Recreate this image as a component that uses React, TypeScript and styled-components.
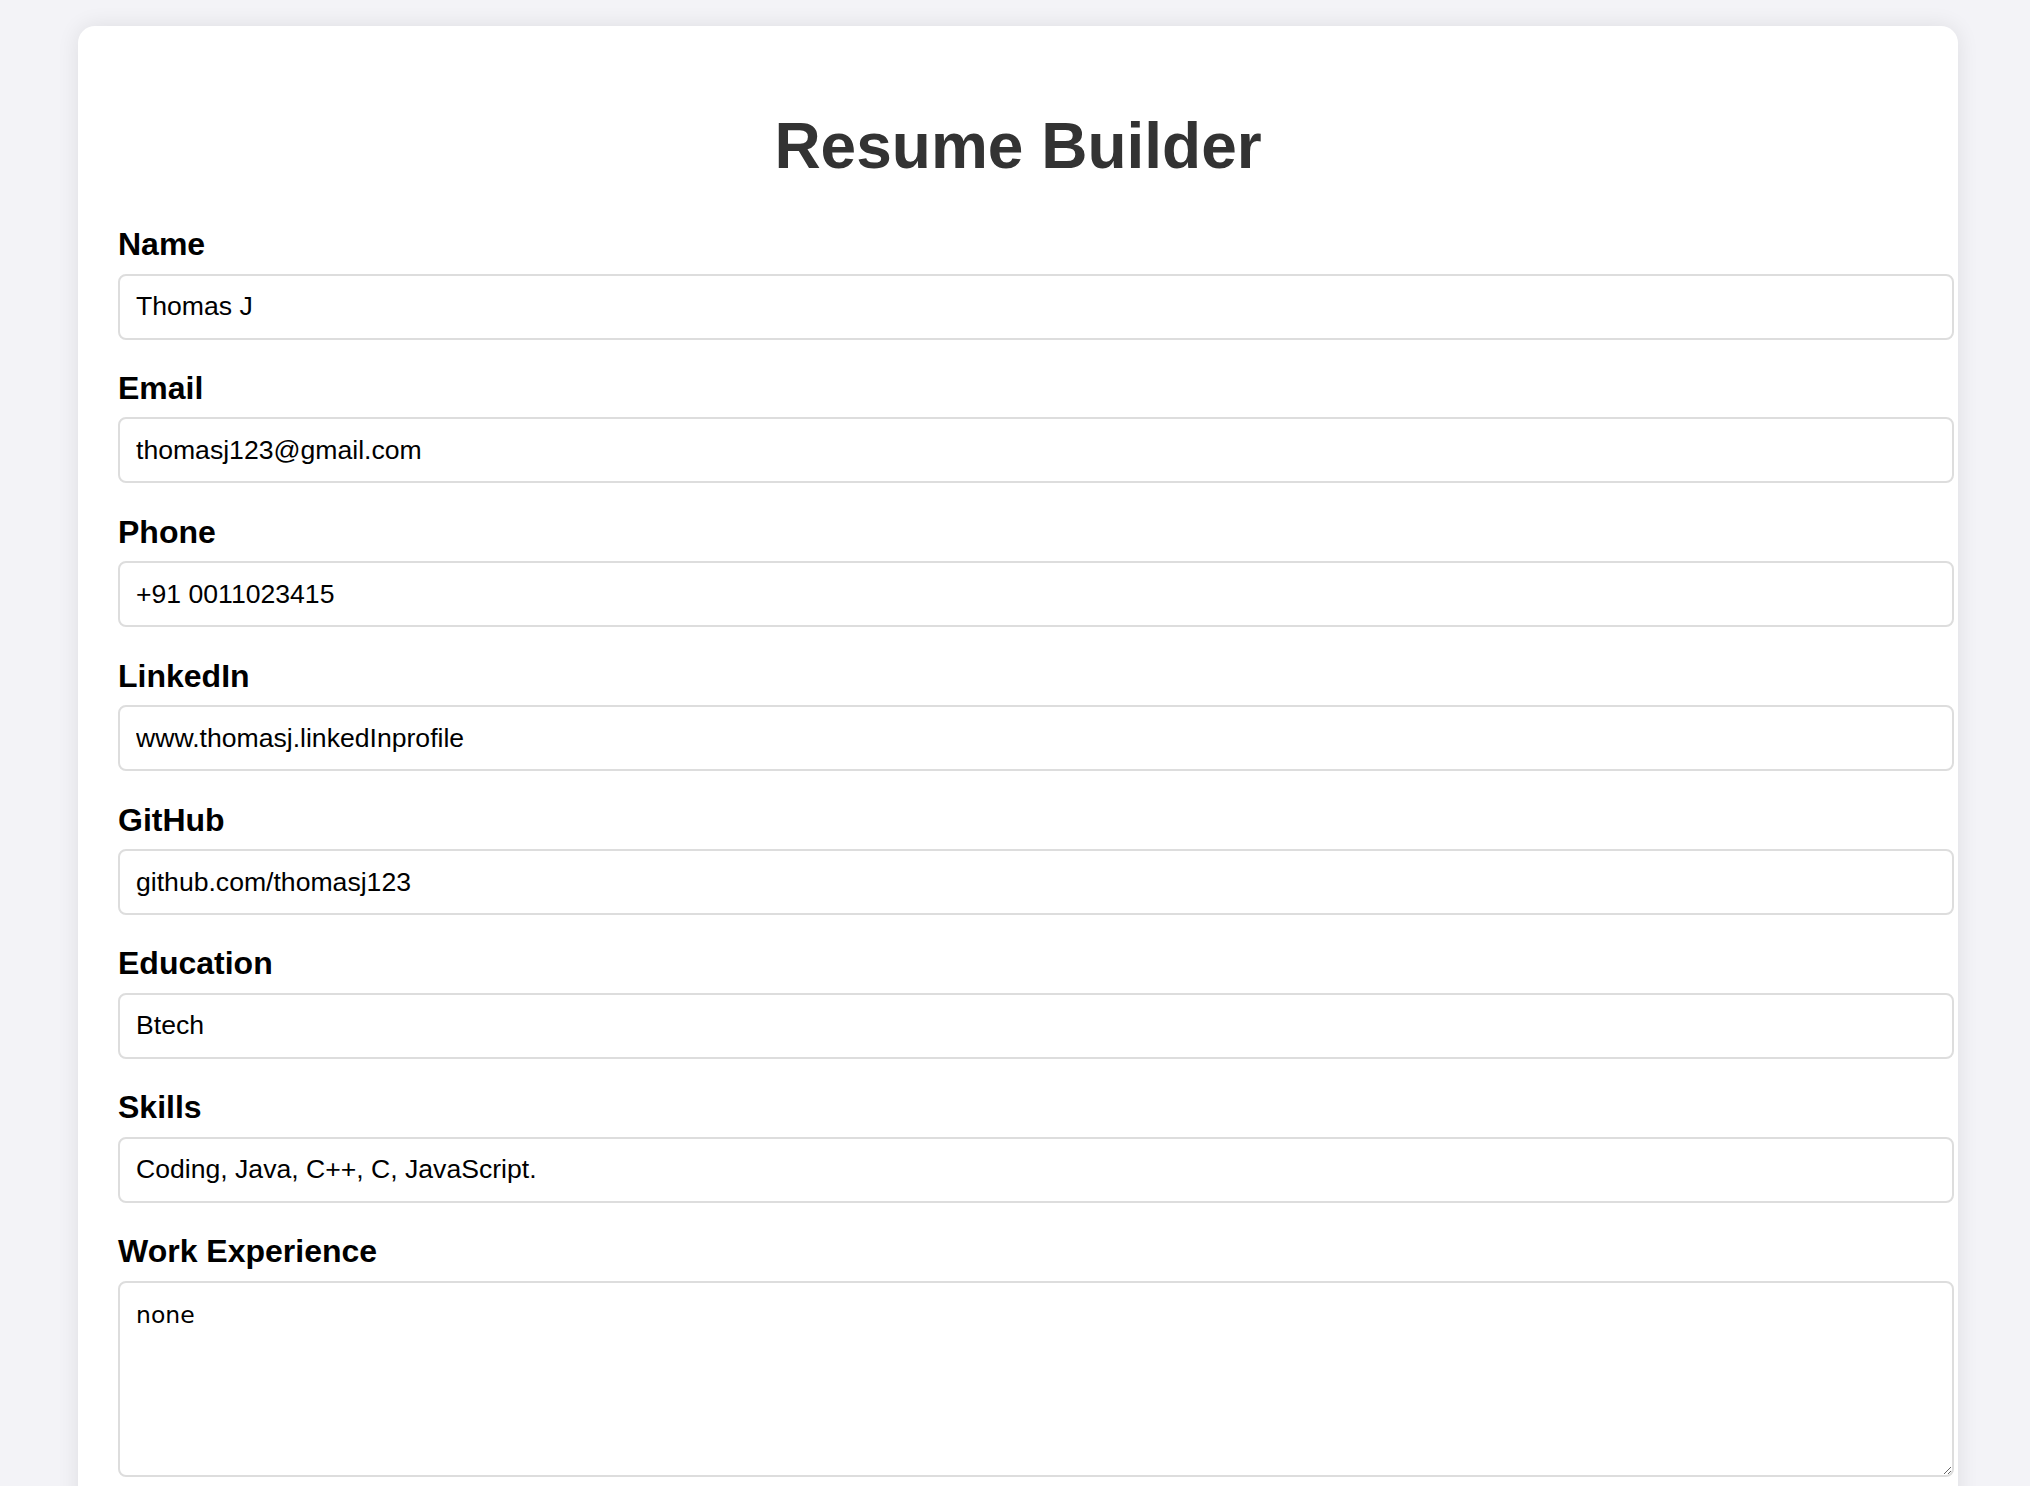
import styled, { createGlobalStyle } from 'styled-components'

const GlobalStyle = createGlobalStyle`
    html, body {
        margin: 0;
        padding: 0;
        background: #f3f3f7;
    }

    body {
        font-family: "Liberation Sans", Arial, sans-serif;
    }
`

const Page = styled.main`
    min-height: 100vh;
    padding: 26px 72px 0 78px;
    box-sizing: border-box;
`

const Card = styled.section`
    width: 1800px;
    padding: 40px 40px 60px;
    background: #fff;
    border-radius: 17px;
    box-shadow: 0 0 22px rgba(0, 0, 0, 0.09);
`

const Title = styled.h1`
    margin: 43px 0;
    font-size: 64px;
    font-weight: 700;
    color: #333;
    text-align: center;
`

const Field = styled.div`
    margin-bottom: 30.4px;
`

const Label = styled.label`
    display: block;
    margin-bottom: 10.5px;
    font-size: 32px;
    font-weight: 700;
    color: #000;
`

const Input = styled.input`
    display: block;
    width: 100%;
    padding: 15.5px 16px;
    border: 2px solid #ddd;
    border-radius: 8px;
    font-family: "Liberation Sans", Arial, sans-serif;
    font-size: 26.6px;
    color: #000;
    background: #fff;
    outline: none;
`

const TextArea = styled.textarea`
    display: block;
    width: 100%;
    height: 158px;
    padding: 18px 16px 16px;
    border: 2px solid #ddd;
    border-radius: 8px;
    font-family: "DejaVu Sans", sans-serif;
    font-size: 23.5px;
    color: #000;
    background: #fff;
    outline: none;
`

const fields = [
    { id: 'name', label: 'Name', value: 'Thomas J' },
    { id: 'email', label: 'Email', value: 'thomasj123@gmail.com' },
    { id: 'phone', label: 'Phone', value: '+91 0011023415' },
    { id: 'linkedin', label: 'LinkedIn', value: 'www.thomasj.linkedInprofile' },
    { id: 'github', label: 'GitHub', value: 'github.com/thomasj123' },
    { id: 'education', label: 'Education', value: 'Btech' },
    { id: 'skills', label: 'Skills', value: 'Coding, Java, C++, C, JavaScript.' },
]

export default function App() {
  return (
    <>
        <GlobalStyle />
        <Page>
            <Card>
                <Title>Resume Builder</Title>
                {fields.map((f) => (
                    <Field key={f.id}>
                        <Label htmlFor={f.id}>{f.label}</Label>
                        <Input id={f.id} type="text" defaultValue={f.value} />
                    </Field>
                ))}
                <Field>
                    <Label htmlFor="experience">Work Experience</Label>
                    <TextArea id="experience" defaultValue="none" />
                </Field>
            </Card>
        </Page>
    </>
  )
}
